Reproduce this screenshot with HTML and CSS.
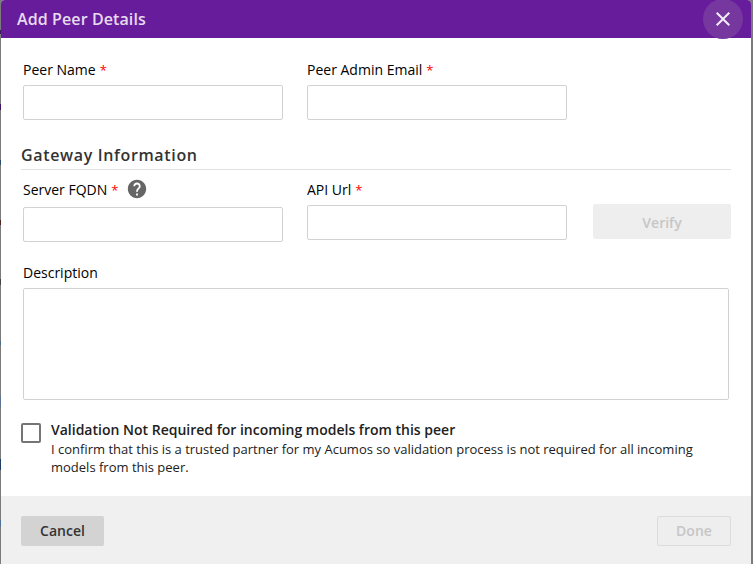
FILE: index.html
```html
<!DOCTYPE html>
<html lang="en">
<head>
<meta charset="utf-8">
<title>Add Peer Details</title>
<link rel="stylesheet" href="styles.css">
</head>
<body>
<div class="dialog">
  <header class="header">
    <h1 class="title">Add Peer Details</h1>
    <button class="close" type="button" aria-label="Close">
      <svg width="24" height="24" viewBox="0 0 24 24"><path d="M19 6.41L17.59 5 12 10.59 6.41 5 5 6.41 10.59 12 5 17.59 6.41 19 12 13.41 17.59 19 19 17.59 13.41 12z"/></svg>
    </button>
  </header>
  <main class="content">
    <div class="row">
      <div class="field"><label class="label"><span>Peer Name</span> <span class="req">*</span></label><input class="input" type="text"></div>
      <div class="field"><label class="label"><span>Peer Admin Email</span> <span class="req">*</span></label><input class="input" type="text"></div>
    </div>
    <h2 class="section">Gateway Information</h2>
    <div class="row gateway">
      <div class="field">
        <label class="label tall"><span>Server FQDN</span> <span class="req">*</span>
          <svg class="help" width="22" height="22" viewBox="0 0 24 24"><path d="M12 2C6.48 2 2 6.48 2 12s4.48 10 10 10 10-4.48 10-10S17.52 2 12 2zm1 17h-2v-2h2v2zm2.07-7.75l-.9.92C13.45 12.9 13 13.5 13 15h-2v-.5c0-1.1.45-2.1 1.17-2.83l1.24-1.26c.37-.36.59-.86.59-1.41 0-1.1-.9-2-2-2s-2 .9-2 2H8c0-2.210 1.790-4 4-4s4 1.790 4 4c0 .88-.36 1.680-.93 2.250z"/></svg>
        </label>
        <input class="input" type="text">
      </div>
      <div class="field"><label class="label"><span>API Url</span> <span class="req">*</span></label><input class="input" type="text"></div>
      <button class="verify" type="button" disabled>Verify</button>
    </div>
    <div class="description">
      <label class="label">Description</label>
      <textarea class="area"></textarea>
    </div>
    <div class="validation">
      <span class="box"></span>
      <div class="copy">
        <p class="strong">Validation Not Required for incoming models from this peer</p>
        <p class="note">I confirm that this is a trusted partner for my Acumos so validation process is not required for all incoming models from this peer.</p>
      </div>
    </div>
  </main>
  <footer class="footer">
    <button class="cancel" type="button">Cancel</button>
    <button class="done" type="button" disabled>Done</button>
  </footer>
</div>
</body>
</html>
```
FILE: styles.css
```css
* { box-sizing: border-box; }
html, body { margin: 0; height: 100%; overflow: hidden; }
body {
  padding: 0 2px 0 1px;
  /* dimmed page content along the left edge of the dialog */
  background:
    linear-gradient(#7b7b7b 30px, #3d1a5c 30px 34px, #7b7b7b 34px 104px, #40155e 104px 110px, #7b7b7b 110px 160px, #2a4a70 160px 165px, #7b7b7b 165px 220px, #4a2418 220px 225px, #7b7b7b 225px 279px, #444 279px 285px, #7b7b7b 285px 341px, #4a6a85 341px 345px, #7b7b7b 345px 396px, #5c7391 396px 407px, #7b7b7b 407px 459px, #1f4066 459px 470px, #7b7b7b 470px 520px, #526f94 520px 527px, #7b7b7b 527px) 0 0 / 1px 100% no-repeat,
    #7b7b7b;
  font-family: "Open Sans", "Noto Sans", sans-serif;
  font-size: 14px;
  color: #000;
}
h1, h2, p { margin: 0; }
button, input, textarea { font: inherit; margin: 0; }
.dialog {
  height: 564px;
  display: flex;
  flex-direction: column;
  background: #fff;
  border-radius: 4px 4px 0 0;
}
.header {
  height: 38px;
  flex: none;
  display: flex;
  align-items: center;
  justify-content: space-between;
  padding: 0 8px 0 16px;
  background: #671c9c;
  border-radius: 4px 4px 0 0;
}
.title { font-size: 16px; font-weight: 600; line-height: 22px; letter-spacing: .1px; color: #e7dcef; }
.close {
  width: 40px;
  height: 40px;
  flex: none;
  padding: 0;
  border: 0;
  border-radius: 50%;
  background: #76379f;
  display: flex;
  align-items: center;
  justify-content: center;
}
.close svg { fill: #f3edf7; }
.content { flex: none; height: 458px; padding: 22px 20px 0; }
.row { display: flex; gap: 24px; padding-left: 2px; align-items: flex-start; }
.field { width: 260px; }
.label { display: flex; align-items: center; height: 20px; line-height: 20px; margin-bottom: 5px; }
.req { color: #f00; margin-left: 4px; font-size: 13px; }
.input {
  display: block;
  width: 260px;
  height: 35px;
  border: 1px solid #d2d2d2;
  border-radius: 2px;
  background: #fff;
}
.section {
  margin-top: 23px;
  height: 27px;
  line-height: 24px;
  border-bottom: 1px solid #e2e2e2;
  font-size: 16px;
  font-weight: 600;
  letter-spacing: .65px;
  color: #333;
}
.gateway { padding-top: 10px; }
.tall { margin-bottom: 7px; }
.help { margin: 0 0 2px 8px; fill: #666; }
.verify {
  width: 138px;
  height: 35px;
  margin: 24px 0 0 2px;
  padding: 2px 0 0;
  border: 0;
  border-radius: 2px;
  background: #eee;
  color: #c6c6c6;
  font-weight: 600;
}
.description { margin: 21px 2px 0; }
.area {
  display: block;
  width: 706px;
  height: 112px;
  border: 1px solid #d2d2d2;
  border-radius: 2px;
  resize: none;
}
.description .label { margin-bottom: 5px; }
.validation { display: flex; gap: 10px; margin-top: 20px; }
.box { width: 20px; height: 20px; flex: none; margin-top: 3px; border: 2px solid #757575; border-radius: 2px; }
.copy { color: #212121; }
.strong { font-weight: 600; line-height: 20px; }
.note { width: 660px; font-size: 13px; line-height: 18px; }
.footer {
  flex: 1;
  display: flex;
  align-items: flex-start;
  justify-content: space-between;
  padding: 20px 20px 0;
  background: #f0f0f0;
}
.cancel, .done { height: 30px; border-radius: 2px; font-weight: 600; padding: 0 0 2px; }
.cancel { width: 83px; border: 0; background: #d3d3d3; color: #333; }
.done { width: 74px; border: 1px solid #dcdcdc; background: #eee; color: #c6c6c6; }
```
